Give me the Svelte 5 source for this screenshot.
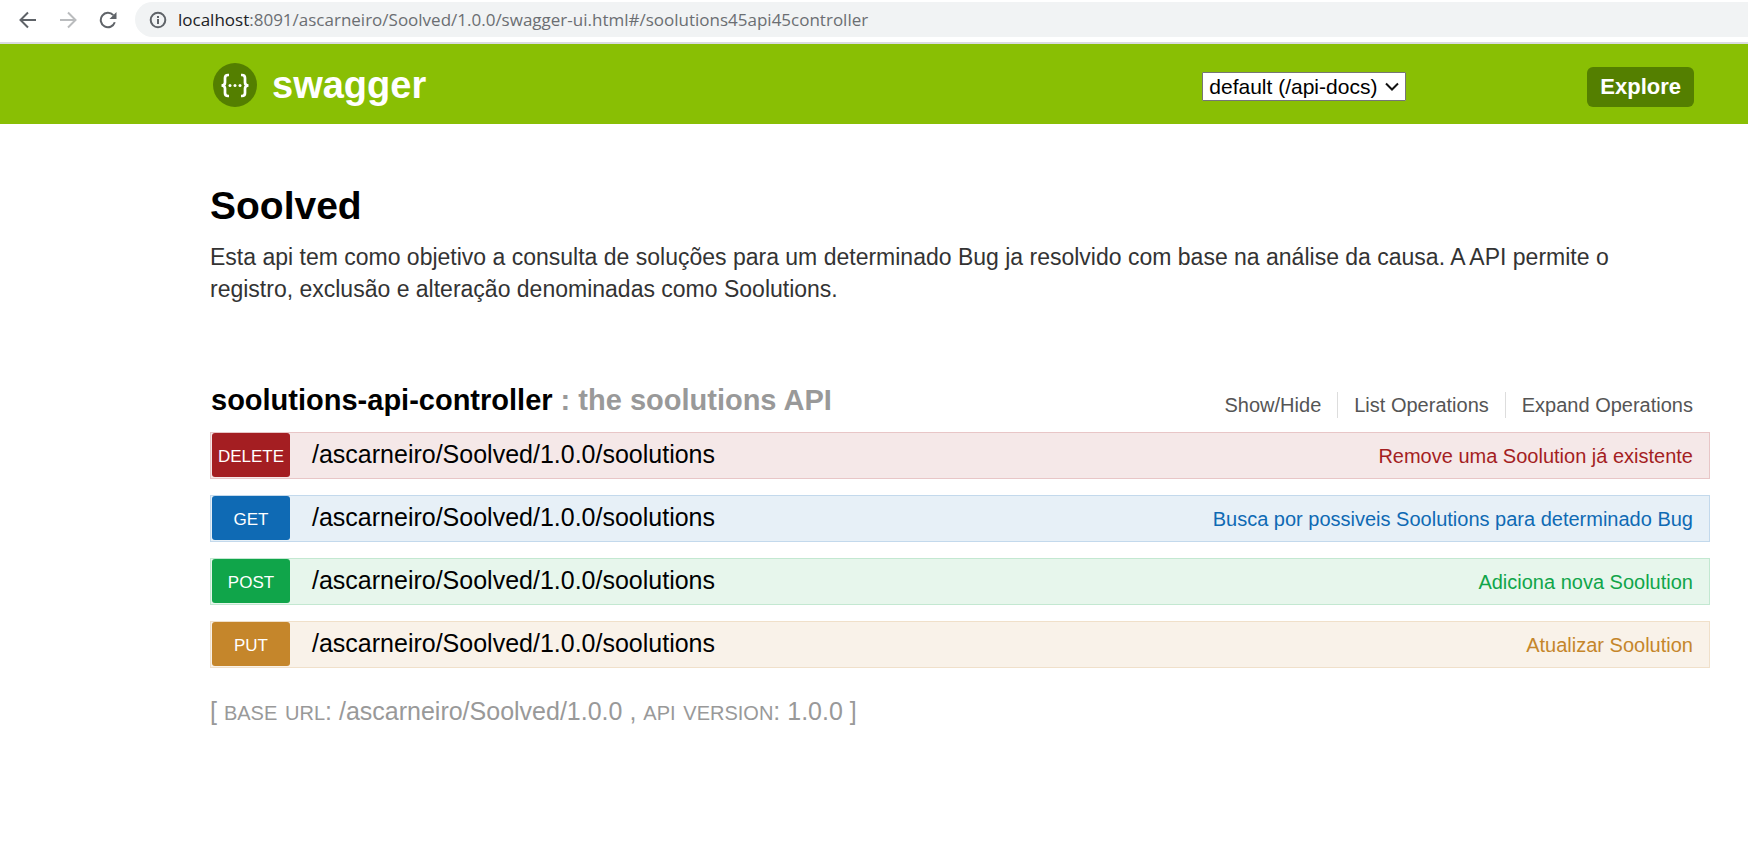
<script>
  let spec = $state('default');

  const operations = [
    { method: 'delete', summary: 'Remove uma Soolution já existente' },
    { method: 'get', summary: 'Busca por possiveis Soolutions para determinado Bug' },
    { method: 'post', summary: 'Adiciona nova Soolution' },
    { method: 'put', summary: 'Atualizar Soolution' }
  ];
  const path = '/ascarneiro/Soolved/1.0.0/soolutions';
</script>

<div class="browser">
  <button class="nav" aria-label="Back">
    <svg width="18" height="18" viewBox="0 0 18 18"><path d="M17 9H2M9 1.500L1.500 9l7.500 7.500" /></svg>
  </button>
  <button class="nav off" aria-label="Forward">
    <svg width="18" height="18" viewBox="0 0 18 18"><path d="M1 9h15M9 1.500L16.500 9l-7.500 7.500" /></svg>
  </button>
  <button class="nav" aria-label="Reload">
    <svg width="18" height="18" viewBox="0 0 18 18"><path d="M15.800 11.300A7.200 7.200 0 1 1 14.300 4.200" /><path class="solid" d="M17.500 1v7h-7z" /></svg>
  </button>
  <div class="address">
    <svg width="18" height="18" viewBox="0 0 18 18"><circle cx="9" cy="9" r="7.300" /><path d="M9 8v5M9 5v2" /></svg>
    <span class="url"><b>localhost</b>:8091/ascarneiro/Soolved/1.0.0/swagger-ui.html#/soolutions45api45controller</span>
  </div>
</div>

<header>
  <a class="logo" href="#top">
    <svg width="44" height="44" viewBox="0 0 44 44">
      <circle cx="22" cy="22" r="22" fill="#547f00" />
      <path
        d="M16 12h-1q-3 0-3 3v4.500q0 3-3.500 3q3.500 0 3.500 3v4.500q0 3 3 3h1M28 12h1q3 0 3 3v4.500q0 3 3.500 3q-3.500 0-3.500 3v4.500q0 3-3 3h-1"
        fill="none" stroke="#fff" stroke-width="2.700" />
      <circle cx="17" cy="22.500" r="1.500" fill="#fff" />
      <circle cx="22" cy="22.500" r="1.500" fill="#fff" />
      <circle cx="27" cy="22.500" r="1.500" fill="#fff" />
    </svg>
    <span>swagger</span>
  </a>
  <form onsubmit={(e) => e.preventDefault()}>
    <div class="picker">
      <select aria-label="API definition" bind:value={spec}>
        <option value="default">default (/api-docs)</option>
      </select>
      <svg width="14" height="10" viewBox="0 0 14 10"><path d="M1 1.500l6 6 6-6" /></svg>
    </div>
    <button class="explore">Explore</button>
  </form>
</header>

<main>
  <h1>Soolved</h1>
  <p class="description">
    Esta api tem como objetivo a consulta de soluções para um determinado Bug ja resolvido com base na análise da causa. A API permite o registro, exclusão e alteração denominadas como Soolutions.
  </p>

  <section>
    <div class="heading">
      <h2><a href="#controller">soolutions-api-controller</a> : the soolutions API</h2>
      <ul class="options">
        <li><a href="#toggle">Show/Hide</a></li>
        <li><a href="#list">List Operations</a></li>
        <li><a href="#expand">Expand Operations</a></li>
      </ul>
    </div>
    <ul class="operations">
      {#each operations as op}
        <li class={op.method}>
          <a class="method" href="#{op.method}">{op.method.toUpperCase()}</a>
          <a class="path" href="#{op.method}">{path}</a>
          <a class="summary" href="#{op.method}">{op.summary}</a>
        </li>
      {/each}
    </ul>
  </section>

  <footer>
    [ <span>base url</span>: /ascarneiro/Soolved/1.0.0 , <span>api version</span>: 1.0.0 ]
  </footer>
</main>

<style>
  :global(body) {
    margin: 0;
    background: #fff;
    font-family: "Liberation Sans", Arial, sans-serif;
    overflow-x: hidden;
  }
  a { color: inherit; text-decoration: none; }
  button { border: 0; padding: 0; font-family: inherit; cursor: pointer; }
  ul { list-style: none; margin: 0; padding: 0; }

  .browser {
    display: flex;
    align-items: center;
    padding: 2px 0 5px 19px;
    border-bottom: 2px solid #dadce0;
  }
  .nav { display: flex; margin-right: 22px; background: none; }
  .browser svg { fill: none; stroke: #5f6368; stroke-width: 2; }
  .browser .off svg { stroke: #babcbe; }
  .browser .solid { fill: #5f6368; stroke: none; }
  .nav:nth-child(3) { margin-right: 18px; }
  .address {
    display: flex;
    flex: 1;
    align-items: center;
    gap: 11px;
    height: 35px;
    padding-left: 14px;
    border-radius: 18px 0 0 18px;
    background: #f1f3f4;
  }
  .url { font: 17px/24px "Open Sans", sans-serif; color: #6b6e72; white-space: nowrap; }
  .url b { font-weight: 400; color: #202124; }

  header {
    display: flex;
    align-items: center;
    justify-content: space-between;
    height: 80px;
    padding: 0 54px 0 213px;
    background: #89bf04;
  }
  .logo { display: flex; align-items: center; gap: 15px; padding-top: 2px; color: #fff; font-weight: 700; font-size: 38px; line-height: 44px; }
  form { display: flex; align-items: center; gap: 181px; padding-top: 5px; }
  .picker { display: grid; align-items: center; }
  .picker > * { grid-area: 1 / 1; }
  .picker svg { justify-self: end; margin-right: 7px; fill: none; stroke: #111; stroke-width: 2; pointer-events: none; }
  select {
    appearance: none;
    height: 29px;
    padding: 0 27px 0 6px;
    border: 1px solid #767676;
    border-radius: 1px;
    background: #fff;
    color: #000;
    font: 21px/27px "Liberation Sans", Arial, sans-serif;
  }
  .explore {
    padding: 0 13px;
    border-radius: 6px;
    background: #547f00;
    color: #fff;
    font-size: 22px;
    font-weight: 700;
    line-height: 40px;
  }

  main { padding: 60px 38px 0 210px; }
  h1 { margin: 0; font-size: 39px; line-height: 44px; color: #000; }
  .description { margin: 13px 0 0; padding-right: 40px; font-size: 23px; line-height: 32px; color: #333; }
  section { margin-top: 73px; }
  .heading { display: flex; align-items: center; justify-content: space-between; padding: 0 17px 10px 1px; }
  h2 { margin: 0; font-size: 29px; line-height: 44px; color: #999; }
  h2 a { color: #000; }
  .options { display: flex; padding-top: 10px; font-size: 20px; line-height: 26px; color: #555; }
  .options li + li { margin-left: 16px; padding-left: 16px; border-left: 1px solid #ddd; }

  .operations { display: grid; gap: 16px; }
  .operations li {
    display: flex;
    align-items: flex-start;
    height: 45px;
    padding: 0 16px 0 1px;
    border: 1px solid var(--line);
    background: var(--fill);
    color: var(--tone);
  }
  .delete { --tone: #a41e22; --fill: #f5e8e8; --line: #e8c6c7; }
  .get { --tone: #0f6ab4; --fill: #e7f0f7; --line: #c3d9ec; }
  .post { --tone: #10a54a; --fill: #e7f6ec; --line: #c3e8d1; }
  .put { --tone: #c5862b; --fill: #f9f2e9; --line: #f0e0ca; }
  .method {
    width: 78px;
    padding-top: 4px;
    border-radius: 3px;
    background: var(--tone);
    color: #fff;
    font-size: 17px;
    line-height: 40px;
    text-align: center;
  }
  .path { flex: 1; padding-left: 22px; color: #000; font-size: 25px; line-height: 42px; }
  .summary { font-size: 20px; line-height: 46px; }

  footer { margin-top: 27px; color: #999; font-size: 25px; line-height: 32px; }
  footer span { font-size: 28px; font-variant: small-caps; }
</style>
